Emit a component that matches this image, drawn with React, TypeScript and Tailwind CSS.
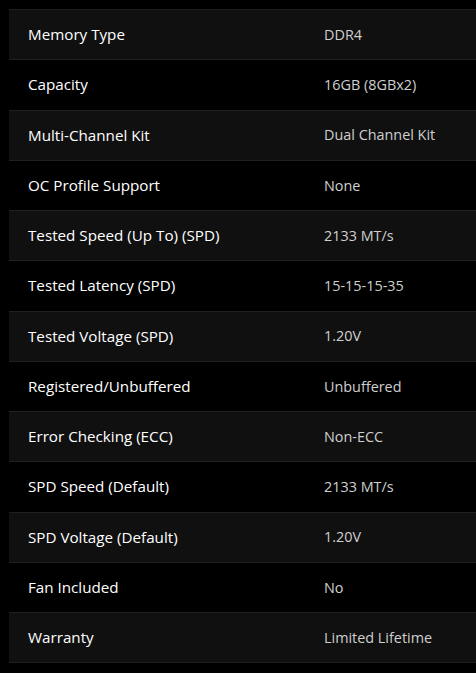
const specs: [string, string][] = [
  ['Memory Type', 'DDR4'],
  ['Capacity', '16GB (8GBx2)'],
  ['Multi-Channel Kit', 'Dual Channel Kit'],
  ['OC Profile Support', 'None'],
  ['Tested Speed (Up To) (SPD)', '2133 MT/s'],
  ['Tested Latency (SPD)', '15-15-15-35'],
  ['Tested Voltage (SPD)', '1.20V'],
  ['Registered/Unbuffered', 'Unbuffered'],
  ['Error Checking (ECC)', 'Non-ECC'],
  ['SPD Speed (Default)', '2133 MT/s'],
  ['SPD Voltage (Default)', '1.20V'],
  ['Fan Included', 'No'],
  ['Warranty', 'Limited Lifetime'],
];

export default function App() {
  return (
    <div className="min-h-[673px] bg-black pt-[9px] pl-[9px] overflow-hidden" style={{ fontFamily: '"Open Sans", "Noto Sans", sans-serif' }}>
      <div className="w-[500px] border-b border-[#202020]">
        {specs.map(([label, value], i) => (
          <div
            key={label}
            className={`flex items-center h-[50.25px] border-t border-[#202020] ${i % 2 === 0 ? 'bg-[#101010]' : 'bg-black'}`}
          >
            <div className="w-[315px] pl-[19px] text-[15.2px] text-white">{label}</div>
            <div className="text-[14.4px] text-[#cfcfcf]">{value}</div>
          </div>
        ))}
      </div>
    </div>
  );
}
